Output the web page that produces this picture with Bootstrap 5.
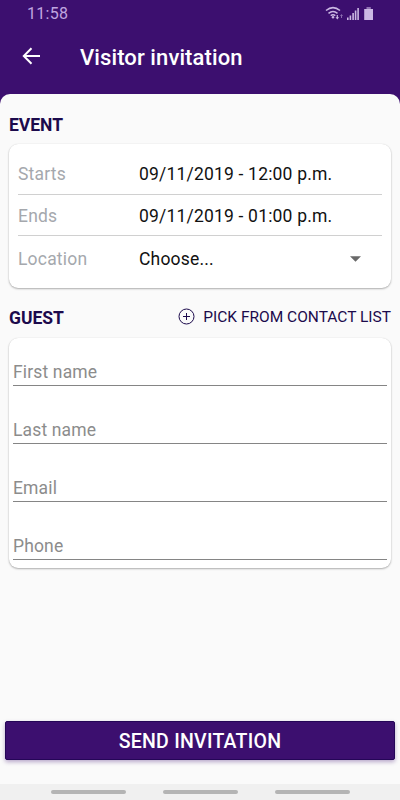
<!DOCTYPE html>
<html lang="en">
<head>
<meta charset="utf-8">
<meta name="viewport" content="width=device-width, initial-scale=1">
<title>Visitor invitation</title>
<link href="https://cdn.jsdelivr.net/npm/bootstrap@5.3.0/dist/css/bootstrap.min.css" rel="stylesheet">
<style>
  :root { --brand: #3c0f6f; --ink: #1c0a4c; }
  body { font-family: Roboto, "Liberation Sans", sans-serif; background: var(--brand); color: #111; font-size: 17.5px; line-height: 20px; }
  .screen { height: 800px; }
  .status { height: 28px; padding: 0 26px 0 27px; color: #c0a5e0; font-size: 16px; letter-spacing: .3px; }
  .toolbar { height: 66px; padding: 0 22px 9px; color: #fff; }
  .toolbar svg { margin-top: -1px; }
  .page-title { font-size: 22px; font-weight: 500; line-height: 26px; letter-spacing: .1px; margin: 2px 0 0 39px; }
  .sheet { background: #fafafa; border-radius: 10px 10px 0 0; padding: 21px 9px 0; }
  .section-title { font-size: 17.5px; font-weight: 700; line-height: 20px; color: var(--ink); margin: 0; }
  .panel { border: 0; border-radius: 9px; box-shadow: 0 1px 2px rgba(0,0,0,.3), 0 0 1px rgba(0,0,0,.12); }
  .event-panel { height: 144px; margin-top: 9px; padding: 9px 9px 0; letter-spacing: .19px; }
  .event-row { height: 41px; padding-top: 1px; border-bottom: 1px solid #d0d0d0; }
  .event-row:first-child { height: 42px; }
  .event-row:last-child { border: 0; height: 45px; padding: 0; }
  .event-label { width: 121px; color: #a5a8ad; }
  .guest-head { margin-top: 18px; height: 22px; }
  .guest-head .section-title { padding-top: 2px; }
  .pick { color: var(--ink); font-size: 15.5px; gap: 8px; }
  .pick svg { margin-top: -2px; }
  .guest-panel { height: 230px; margin-top: 10px; padding: 0 4px; }
  .field { height: 58px; border-bottom: 1px solid #858585; color: #8c8c8c; padding: 0 0 3px; letter-spacing: .15px; }
  .field:first-child { height: 48px; }
  .send { height: 39px; margin: 0 -4px; background: var(--brand); color: #fff; border: 1px solid #250657; border-radius: 2px; font-size: 19.5px; font-weight: 500; line-height: 24px; letter-spacing: .25px; box-shadow: 0 2px 4px rgba(60,15,111,.35); margin-bottom: 24px; padding: 3px 0 0; }
  .sysnav { height: 16px; background: #f0f0f0; gap: 37px; }
  .pill { width: 75px; height: 4px; background: #b4b4b4; }
</style>
</head>
<body>
<div class="screen d-flex flex-column">
  <header>
    <div class="status d-flex align-items-center justify-content-between">
      <span>11:58</span>
      <svg width="50" height="16" viewBox="0 0 50 16" fill="#cbb8e3">
        <g fill="none" stroke="#cbb8e3" stroke-width="1.5">
          <path d="M2 4.500Q9-1.300 16 4.500"/>
          <path d="M4.500 7.300Q9 3.600 13.500 7.300"/>
          <path d="M6.700 9.700Q9 8 11.300 9.700"/>
        </g>
        <circle cx="9" cy="11.200" r="1.200"/>
        <path d="M12.700 9h1.200v2.200h1.200L13.300 13.500 11.500 11.200h1.200z"/>
        <path d="M17 12v-2h-1l1.500-2L19 10h-1v2z" opacity=".55"/>
        <path d="M23 11.500h1.600V14H23zM25.600 9.500h1.600V14h-1.600zM28.300 7h1.600v7h-1.600zM30.800 4.500h1.600V14h-1.600zM33.300 2h1.600v12h-1.600z"/>
        <path d="M40.200 3H49v11H40.200z"/>
        <path d="M42.500 1h4.300v2h-4.300z" opacity=".6"/>
      </svg>
    </div>
    <div class="toolbar d-flex align-items-center">
      <svg width="19" height="18" viewBox="0 0 19 18" fill="none" stroke="#fff" stroke-width="2"><path d="M18 9H2M9.500 1.200 1.800 9l7.700 7.800"/></svg>
      <h1 class="page-title">Visitor invitation</h1>
    </div>
  </header>

  <main class="sheet flex-grow-1 d-flex flex-column">
    <h2 class="section-title">EVENT</h2>
    <section class="card panel event-panel">
      <div class="event-row d-flex align-items-center"><span class="event-label">Starts</span><span>09/11/2019 - 12:00 p.m.</span></div>
      <div class="event-row d-flex align-items-center"><span class="event-label">Ends</span><span>09/11/2019 - 01:00 p.m.</span></div>
      <div class="event-row d-flex align-items-center">
        <span class="event-label">Location</span><span>Choose...</span>
        <svg class="ms-auto me-3" width="21" height="6" viewBox="0 0 21 6"><path d="M5 .3h11L10.500 5.800z" fill="#696969"/></svg>
      </div>
    </section>

    <div class="guest-head d-flex align-items-center justify-content-between">
      <h2 class="section-title">GUEST</h2>
      <div class="pick d-flex align-items-center">
        <svg width="17" height="17" viewBox="0 0 17 17" fill="none" stroke="#1c0a4c"><circle cx="8.500" cy="8.500" r="7.500"/><path d="M8.500 5v7M5 8.500h7"/></svg>
        <span>PICK FROM CONTACT LIST</span>
      </div>
    </div>
    <section class="card panel guest-panel">
      <div class="field d-flex align-items-end">First name</div>
      <div class="field d-flex align-items-end">Last name</div>
      <div class="field d-flex align-items-end">Email</div>
      <div class="field d-flex align-items-end">Phone</div>
    </section>

    <button type="button" class="btn send mt-auto">SEND INVITATION</button>
  </main>

  <footer class="sysnav d-flex align-items-center justify-content-center">
    <span class="pill rounded-pill"></span><span class="pill rounded-pill"></span><span class="pill rounded-pill"></span>
  </footer>
</div>
<script src="https://cdn.jsdelivr.net/npm/bootstrap@5.3.0/dist/js/bootstrap.bundle.min.js"></script>
</body>
</html>
